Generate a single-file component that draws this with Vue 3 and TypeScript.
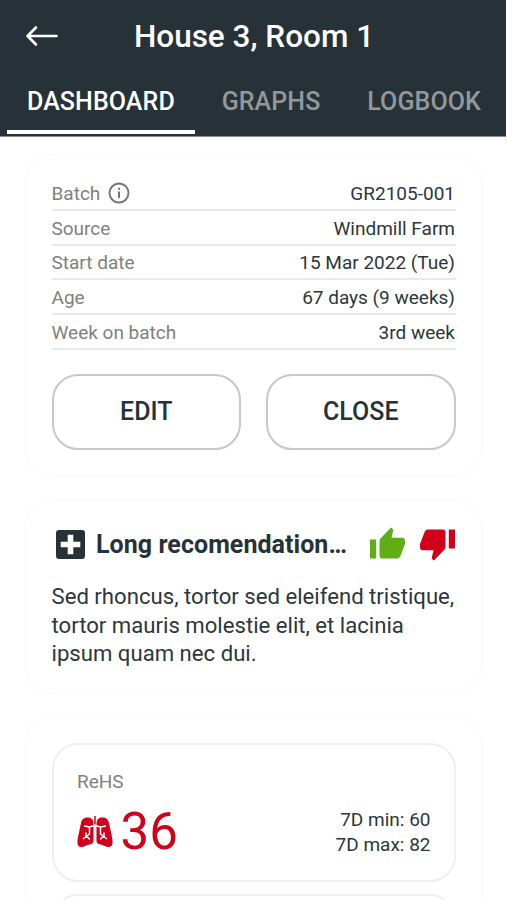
<script setup lang="ts">
import { ref } from 'vue'

interface DetailRow {
  label: string
  value: string
  info?: boolean
}

const tabs: string[] = ['DASHBOARD', 'GRAPHS', 'LOGBOOK']
const activeTab = ref('DASHBOARD')

const details: DetailRow[] = [
  { label: 'Batch', value: 'GR2105-001', info: true },
  { label: 'Source', value: 'Windmill Farm' },
  { label: 'Start date', value: '15 Mar 2022 (Tue)' },
  { label: 'Age', value: '67 days (9 weeks)' },
  { label: 'Week on batch', value: '3rd week' },
]
</script>

<template>
  <div class="screen">
    <header class="header">
      <div class="title-bar">
        <button class="back" aria-label="Back">
          <svg width="34" height="22" viewBox="0 0 34 22" fill="none" stroke="#fff" stroke-width="2.6" stroke-linecap="round" stroke-linejoin="round">
            <path d="M31.500 11H2.500M11 2.500L2.500 11l8.500 8.500" />
          </svg>
        </button>
        <h1 class="title">House 3, Room 1</h1>
      </div>
      <nav class="tabs">
        <button
          v-for="tab in tabs"
          :key="tab"
          class="tab"
          :class="{ active: tab === activeTab }"
          @click="activeTab = tab"
        >{{ tab }}</button>
      </nav>
    </header>

    <main class="content">
      <section class="card batch">
        <dl class="details">
          <div v-for="row in details" :key="row.label" class="row">
            <dt>
              {{ row.label }}
              <svg v-if="row.info" class="info" width="22" height="22" viewBox="0 0 22 22">
                <circle cx="11" cy="11" r="9.500" fill="none" stroke="#757575" stroke-width="1.900" />
                <path d="M10 5.800h2v2h-2zM10 9.500h2v6.500h-2z" fill="#757575" />
              </svg>
            </dt>
            <dd>{{ row.value }}</dd>
          </div>
        </dl>
        <div class="actions">
          <button class="action">EDIT</button>
          <button class="action">CLOSE</button>
        </div>
      </section>

      <section class="card advice">
        <div class="advice-head">
          <svg class="plus" width="29" height="29" viewBox="0 0 29 29">
            <rect width="29" height="29" rx="3" fill="#263238" />
            <path d="M11.700 4.700h5.600v7h7v5.600h-7v7h-5.600v-7h-7v-5.600h7z" fill="#fff" />
          </svg>
          <h2>Long recomendation…</h2>
          <svg class="thumb up" width="35" height="32" viewBox="0 0 35 32" fill="#5fae14">
            <path d="M0 12.500h6.200V31.500H0zM9.500 14q0-1.500 1-2.500L21 .5l1.600 1.200q.8.800.5 2L21.500 10.800H32q3 0 3 3v3.200l-4.800 12.500q-.8 2-3 2H12.500q-3 0-3-3z" />
          </svg>
          <svg class="thumb down" width="35" height="32" viewBox="0 0 35 32" fill="#d0021b">
            <path d="M28.800 .5H35v19h-6.200zM25.500 18q0 1.500-1 2.500L14 31.500l-1.600-1.200q-.8-.8-.5-2L13.500 21.200H3q-3 0-3-3v-3.200L4.800 2.500q.8-2 3-2h14.700q3 0 3 3z" />
          </svg>
        </div>
        <p>Sed rhoncus, tortor sed eleifend tristique, tortor mauris molestie elit, et lacinia ipsum quam nec dui.</p>
      </section>

      <section class="card metrics">
        <article class="metric">
          <div class="metric-name">ReHS</div>
          <div class="metric-body">
            <svg class="lungs" width="36" height="32" viewBox="0 0 36 32">
              <path d="M16.500 8C16.500 3 14 1.500 10.500 1.500C7 1.500 5 3 4 7L.8 22C0 27.500.5 31 4 31c2 0 3.500-.8 6-1.800l4-1.200c2-.6 2.500-1.500 2.500-3.500zM19.500 8C19.500 3 22 1.500 25.500 1.500C29 1.500 31 3 32 7l3.200 15c.8 5.500.3 9-3.200 9-2 0-3.500-.8-6-1.800l-4-1.200c-2-.6-2.500-1.500-2.500-3.500z" fill="#d0021b" />
              <path d="M18 7.500v2L12.500 11 7 10M12.500 11v7L6 23M9 20.500v-4M9.800 20l3 3.500M18 9.500l5.500 1.500 5.500-1M23.500 11v7l6.500 5M27 20.500v-4M26.200 20l-3 3.500" fill="none" stroke="#fff" stroke-width="1.500" />
              <path d="M18 0v8.500" stroke="#d0021b" stroke-width="1.500" />
            </svg>
            <span class="score">36</span>
            <div class="range">
              <div>7D min: 60</div>
              <div>7D max: 82</div>
            </div>
          </div>
        </article>
        <article class="metric"></article>
      </section>
    </main>
  </div>
</template>

<style>
body {
  margin: 0;
  background: #fff;
}
</style>

<style scoped>
.screen {
  box-sizing: border-box;
  width: 507px;
  height: 900px;
  overflow: hidden;
  font-family: Roboto, 'Liberation Sans', sans-serif;
  color: #2c373c;
}
button {
  font: inherit;
  background: none;
  border: 0;
  padding: 0;
}
.header {
  box-sizing: border-box;
  width: 506px;
  height: 137px;
  background: #263238;
  border-bottom: 1px solid #858b8f;
}
.title-bar {
  display: grid;
  grid-template-columns: 34px 1fr 34px;
  align-items: center;
  height: 72px;
  padding: 0 23px 0 25px;
}
.back {
  display: flex;
}
.title {
  margin: 0;
  text-align: center;
  color: #fff;
  font-size: 31.500px;
  font-weight: 500;
  white-space: nowrap;
}
.tabs {
  display: flex;
  justify-content: space-between;
  height: 62px;
  padding: 0 5px 0 7px;
}
.tab {
  box-sizing: border-box;
  padding: 2px 20px 0;
  border-bottom: 4px solid transparent;
  color: #92989b;
  font-size: 25px;
  font-weight: 500;
  letter-spacing: 0.100px;
  line-height: 56px;
}
.tab.active {
  color: #fff;
  border-bottom-color: #fff;
}
.content {
  display: flex;
  flex-direction: column;
  gap: 26px;
  padding: 19px 26px 0;
}
.card {
  box-sizing: border-box;
  padding: 0 25.500px;
  border-radius: 26px;
  background: #fff;
  box-shadow: 0 0 3px rgba(0, 0, 0, 0.06);
}
.batch {
  height: 319px;
  padding-top: 20px;
}
.details {
  margin: 0;
}
.row {
  box-sizing: border-box;
  display: flex;
  justify-content: space-between;
  align-items: center;
  height: 34.800px;
  padding-top: 2px;
  border-bottom: 2px solid #e9e9e9;
  font-size: 19px;
}
dt {
  display: flex;
  align-items: center;
  gap: 8px;
  color: #808080;
}
dd {
  margin: 0;
  padding-right: 0.500px;
}
.actions {
  display: grid;
  grid-template-columns: 1fr 1fr;
  gap: 25px;
  margin-top: 24px;
}
.action {
  box-sizing: border-box;
  height: 76px;
  border: 2px solid #c8c8c8;
  border-radius: 26px;
  color: #263238;
  font-size: 25px;
  font-weight: 500;
}
.advice {
  height: 191px;
  padding-top: 25px;
}
.advice-head {
  display: flex;
  align-items: center;
  height: 36px;
  padding-left: 4.500px;
}
h2 {
  flex: 1;
  margin: 0 0 0 11px;
  color: #263238;
  font-size: 25px;
  font-weight: 700;
  letter-spacing: 0.050px;
  white-space: nowrap;
}
.up {
  margin-top: -2px;
}
.down {
  margin-top: 2px;
  margin-right: 0.500px;
  margin-left: 15.500px;
}
.advice p {
  margin: 20px -4px 0 0;
  font-size: 22.150px;
  line-height: 28.500px;
}
.metrics {
  display: flex;
  flex-direction: column;
  gap: 12px;
  height: 400px;
  padding-top: 25px;
}
.metric {
  box-sizing: border-box;
  flex: none;
  height: 139px;
  padding: 23.500px 23px 23px 23.500px;
  border: 2px solid #efefef;
  border-radius: 26px;
}
.metric-name {
  color: #808080;
  font-size: 19px;
  line-height: 26px;
}
.metric-body {
  display: flex;
  align-items: center;
  height: 60px;
  margin-top: 7.500px;
}
.score {
  margin-left: 7.500px;
  color: #d0021b;
  font-size: 51px;
  line-height: 60px;
}
.range {
  margin-left: auto;
  text-align: right;
  font-size: 19px;
  line-height: 25.500px;
}
</style>
